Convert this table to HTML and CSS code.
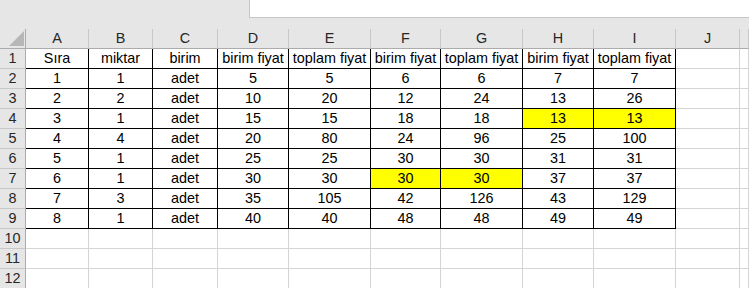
FILE: index.html
```html
<!DOCTYPE html>
<html>
<head>
<meta charset="utf-8">
<link rel="stylesheet" href="styles.css">
</head>
<body>
<div class="topbar"><div class="formula"></div></div>
<div class="sheet">
  <div class="corner"><div class="tri"></div></div>
  <div class="ch">A</div><div class="ch">B</div><div class="ch">C</div><div class="ch">D</div><div class="ch">E</div><div class="ch">F</div><div class="ch">G</div><div class="ch">H</div><div class="ch">I</div><div class="ch">J</div><div class="ch"></div>

  <div class="rh">1</div><div class="c b">Sıra</div><div class="c b">miktar</div><div class="c b">birim</div><div class="c b">birim fiyat</div><div class="c b">toplam fiyat</div><div class="c b">birim fiyat</div><div class="c b">toplam fiyat</div><div class="c b">birim fiyat</div><div class="c b">toplam fiyat</div><div class="c"></div><div class="c"></div>

  <div class="rh">2</div><div class="c b">1</div><div class="c b">1</div><div class="c b">adet</div><div class="c b">5</div><div class="c b">5</div><div class="c b">6</div><div class="c b">6</div><div class="c b">7</div><div class="c b">7</div><div class="c"></div><div class="c"></div>

  <div class="rh">3</div><div class="c b">2</div><div class="c b">2</div><div class="c b">adet</div><div class="c b">10</div><div class="c b">20</div><div class="c b">12</div><div class="c b">24</div><div class="c b">13</div><div class="c b">26</div><div class="c"></div><div class="c"></div>

  <div class="rh">4</div><div class="c b">3</div><div class="c b">1</div><div class="c b">adet</div><div class="c b">15</div><div class="c b">15</div><div class="c b">18</div><div class="c b">18</div><div class="c b y">13</div><div class="c b y">13</div><div class="c"></div><div class="c"></div>

  <div class="rh">5</div><div class="c b">4</div><div class="c b">4</div><div class="c b">adet</div><div class="c b">20</div><div class="c b">80</div><div class="c b">24</div><div class="c b">96</div><div class="c b">25</div><div class="c b">100</div><div class="c"></div><div class="c"></div>

  <div class="rh">6</div><div class="c b">5</div><div class="c b">1</div><div class="c b">adet</div><div class="c b">25</div><div class="c b">25</div><div class="c b">30</div><div class="c b">30</div><div class="c b">31</div><div class="c b">31</div><div class="c"></div><div class="c"></div>

  <div class="rh">7</div><div class="c b">6</div><div class="c b">1</div><div class="c b">adet</div><div class="c b">30</div><div class="c b">30</div><div class="c b y">30</div><div class="c b y">30</div><div class="c b">37</div><div class="c b">37</div><div class="c"></div><div class="c"></div>

  <div class="rh">8</div><div class="c b">7</div><div class="c b">3</div><div class="c b">adet</div><div class="c b">35</div><div class="c b">105</div><div class="c b">42</div><div class="c b">126</div><div class="c b">43</div><div class="c b">129</div><div class="c"></div><div class="c"></div>

  <div class="rh">9</div><div class="c b">8</div><div class="c b">1</div><div class="c b">adet</div><div class="c b">40</div><div class="c b">40</div><div class="c b">48</div><div class="c b">48</div><div class="c b">49</div><div class="c b">49</div><div class="c"></div><div class="c"></div>

  <div class="rh">10</div><div class="c"></div><div class="c"></div><div class="c"></div><div class="c"></div><div class="c"></div><div class="c"></div><div class="c"></div><div class="c"></div><div class="c"></div><div class="c"></div><div class="c"></div>

  <div class="rh">11</div><div class="c"></div><div class="c"></div><div class="c"></div><div class="c"></div><div class="c"></div><div class="c"></div><div class="c"></div><div class="c"></div><div class="c"></div><div class="c"></div><div class="c"></div>

  <div class="rh">12</div><div class="c"></div><div class="c"></div><div class="c"></div><div class="c"></div><div class="c"></div><div class="c"></div><div class="c"></div><div class="c"></div><div class="c"></div><div class="c"></div><div class="c"></div>
</div>
</body>
</html>
```
FILE: styles.css
```css
* { box-sizing: border-box; }
html, body { margin: 0; padding: 0; background: #fff; overflow: hidden; }
body {
  width: 749px;
  height: 288px;
  font-family: "Liberation Sans", Arial, sans-serif;
  font-size: 14.4px;
  color: #000;
}
.topbar {
  height: 29px;
  background: #e6e6e6;
  padding-left: 249px;
}
.formula {
  height: 18px;
  background: #fff;
  border-left: 1px solid #c6c6c6;
  border-bottom: 1px solid #c6c6c6;
}
.sheet {
  display: grid;
  grid-template-columns: 26px 63px 64px 65px 71px 82px 70px 82px 71px 82px 64px 1fr;
  grid-auto-rows: 20px;
}
.corner {
  background: #e6e6e6;
  border-right: 1px solid #ababab;
  border-bottom: 1px solid #ababab;
  display: flex;
  justify-content: flex-end;
  align-items: flex-end;
  padding: 0 1px 2px 0;
}
.tri {
  width: 15px;
  height: 15px;
  background: #b7b7b7;
  clip-path: polygon(100% 0, 100% 100%, 0 100%);
}
.ch, .rh {
  background: #e6e6e6;
  color: #262626;
  text-align: center;
  line-height: 19px;
  border-bottom: 1px solid #ababab;
}
.ch { border-right: 1px solid #c8c8c8; }
.rh { border-right: 1px solid #ababab; border-bottom-color: #c8c8c8; }
.c {
  border-right: 1px solid #d4d4d4;
  border-bottom: 1px solid #d4d4d4;
  text-align: center;
  line-height: 19px;
  white-space: nowrap;
  overflow: hidden;
}
.c.b { border-right-color: #000; border-bottom-color: #000; }
.c.y { background: #ffff00; }
```
